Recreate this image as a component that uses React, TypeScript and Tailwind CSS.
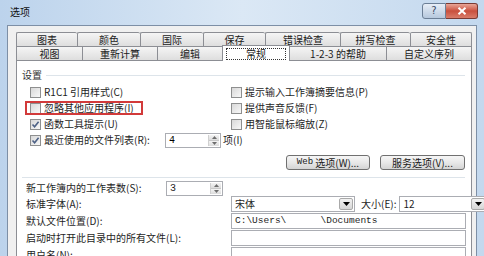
import React from "react";

const CJK = "font-['Noto_Sans_CJK_SC','Noto_Sans_CJK_JP',sans-serif]";

const row1 = [
  { t: "图表", w: "w-[61px]" },
  { t: "颜色", w: "w-[63px]" },
  { t: "国际", w: "w-[63px]" },
  { t: "保存", w: "w-[62px]" },
  { t: "错误检查", w: "w-[75px]" },
  { t: "拼写检查", w: "w-[70px]" },
  { t: "安全性", w: "w-[62px]" },
];

const row2 = [
  { t: "视图", w: "w-[66px]" },
  { t: "重新计算", w: "w-[75px]" },
  { t: "编辑", w: "w-[65px]" },
  { t: "常规", w: "w-[68px]", sel: true },
  { t: "1-2-3 的帮助", w: "w-[96px]" },
  { t: "自定义序列", w: "w-[86px]" },
];

function Box({ checked }: { checked?: boolean }) {
  return (
    <span className="w-[11px] h-[11px] shrink-0 border border-[#8e8f8f] bg-gradient-to-br from-[#d8d8d8] to-[#f8f8f8] flex items-center justify-center">
      {checked && (
        <svg width="9" height="9" viewBox="0 0 9 9">
          <path d="M1.5 4.5 L3.6 6.8 L7.6 1.8" fill="none" stroke="#4d6185" strokeWidth="1.6" />
        </svg>
      )}
    </span>
  );
}

function CheckRow({ label, checked }: { label: React.ReactNode; checked?: boolean }) {
  return (
    <div className="h-[16px] flex items-center gap-[3px]">
      <Box checked={checked} />
      <span className="text-[10px] leading-none text-[#1e1e1e] whitespace-nowrap">{label}</span>
    </div>
  );
}

function Spin({ value, w }: { value: string; w: string }) {
  return (
    <div className={`${w} h-[15px] shrink-0 border border-[#abadb3] bg-white flex`}>
      <span className="flex-1 pl-[3px] text-[10px] leading-[13px] font-['Liberation_Mono',monospace]">{value}</span>
      <span className="w-[11px] flex flex-col border-l border-[#d0d0d0] my-[1px] mr-[1px]">
        <span className="flex-1 bg-gradient-to-b from-[#f4f4f4] to-[#dcdcdc] border-b border-[#c8c8c8] flex items-center justify-center">
          <svg width="5" height="3" viewBox="0 0 5 3"><path d="M0 3 L2.5 0 L5 3Z" fill="#6d6d6d" /></svg>
        </span>
        <span className="flex-1 bg-gradient-to-b from-[#f4f4f4] to-[#dcdcdc] flex items-center justify-center">
          <svg width="5" height="3" viewBox="0 0 5 3"><path d="M0 0 L2.5 3 L5 0Z" fill="#6d6d6d" /></svg>
        </span>
      </span>
    </div>
  );
}

function Combo({ value, w }: { value: string; w: string }) {
  return (
    <div className={`${w} h-[16px] shrink-0 border border-[#abadb3] bg-white flex`}>
      <span className="flex-1 pl-[3px] text-[10px] leading-[14px]">{value}</span>
      <span className="w-[14px] m-[1px] border border-[#a9a9a9] rounded-[2px] bg-gradient-to-b from-[#f2f2f2] to-[#d6d6d6] flex items-center justify-center">
        <svg width="7" height="4" viewBox="0 0 7 4"><path d="M0 0 L3.5 4 L7 0Z" fill="#000" /></svg>
      </span>
    </div>
  );
}

function Field({ children }: { children?: React.ReactNode }) {
  return (
    <div className="w-[235px] h-[16px] shrink-0 border border-[#abadb3] bg-white pl-[3px] text-[9.5px] leading-[14px] font-['Liberation_Mono',monospace] whitespace-pre">
      {children}
    </div>
  );
}

export default function App() {
  return (
    <div className={`${CJK} w-[484px] h-[256px] overflow-hidden relative bg-gradient-to-r from-[#bcd3ec] via-[#dbe8f5] to-[#c3d8ee]`}>
      {/* title bar */}
      <div className="h-[25px] flex items-center pl-[10px] pb-[3px] text-[10px] text-[#111]">选项</div>
      <div className="absolute top-[3px] left-[422px] flex">
        <div className="w-[24px] h-[16px] rounded-l-[3px] border border-[#6c7f96] bg-gradient-to-b from-[#e7eef7] to-[#b6c8dd] flex items-center justify-center text-[10px] text-[#3a4a66] leading-none font-['DejaVu_Sans',sans-serif]">?</div>
        <div className="w-[32px] h-[16px] rounded-r-[3px] border border-l-0 border-[#7a3a33] bg-gradient-to-b from-[#e8a597] via-[#c9503e] to-[#d97c6a] flex items-center justify-center">
          <svg width="10" height="8" viewBox="0 0 10 8"><path d="M1.5 0.8 L8.5 7.2 M8.5 0.8 L1.5 7.2" stroke="#fff" strokeWidth="2" /></svg>
        </div>
      </div>

      {/* client area */}
      <div className="ml-[7px] w-[470px] h-[231px] bg-[#f0f0f0] border-l border-t border-r border-[#7d8fa6] pt-[6px] pl-[8px]">
        <div className="w-[456px]">
          {/* back row tabs */}
          <div className="flex h-[14px]">
            {row1.map((tb, i) => (
              <div
                key={tb.t}
                className={`${tb.w} border-t border-l ${i === row1.length - 1 ? "border-r" : ""} border-[#8c8e94] rounded-t-[2px] bg-gradient-to-b from-[#f5f5f5] to-[#dedede] flex items-center justify-center text-[10px] leading-none text-[#1a1a1a]`}
              >
                {tb.t}
              </div>
            ))}
          </div>
          {/* front row tabs */}
          <div className="flex h-[14px] relative z-10">
            {row2.map((tb, i) =>
              tb.sel ? (
                <div
                  key={tb.t}
                  className={`${tb.w} -mt-[1px] h-[16px] border-t border-l border-r border-[#8c8e94] bg-white flex items-start justify-center pt-[2px] px-[3px]`}
                >
                  <span className="w-full h-[12px] border border-dotted border-[#333] flex items-center justify-center text-[10px] leading-none text-[#1a1a1a]">
                    {tb.t}
                  </span>
                </div>
              ) : (
                <div
                  key={tb.t}
                  className={`${tb.w} border-t ${i === 0 || row2[i - 1].sel ? "" : "border-l"} ${i === 0 ? "border-l" : ""} ${i === row2.length - 1 ? "border-r" : ""} border-[#8c8e94] bg-gradient-to-b from-[#f5f5f5] to-[#dedede] flex items-center justify-center text-[10px] leading-none text-[#1a1a1a]`}
                >
                  {tb.t}
                </div>
              )
            )}
          </div>

          {/* panel */}
          <div className="h-[200px] border border-[#8c8e94] bg-white pt-[7px]">
            <div className="h-[14px] flex items-center pl-[5px] pr-[6px] gap-[4px]">
              <span className="text-[10px] leading-none text-[#333]">设置</span>
              <span className="flex-1 h-px bg-[#dde4ea]" />
            </div>
            <div className="mt-[2px] flex">
              <div className="w-[214px] shrink-0 pl-[13px]">
                <CheckRow label="R1C1 引用样式(C)" />
                <div className="relative">
                  <CheckRow label="忽略其他应用程序(I)" />
                  <span className="absolute left-[-5px] top-[1px] w-[118px] h-[14px] border-2 border-[#d23a3a]" />
                </div>
                <CheckRow label="函数工具提示(U)" checked />
                <div className="h-[16px] flex items-center whitespace-nowrap">
                  <Box checked />
                  <span className="ml-[3px] w-[121px] shrink-0 text-[10px] leading-none text-[#1e1e1e]">最近使用的文件列表(R):</span>
                  <Spin value="4" w="w-[56px]" />
                  <span className="ml-[2px] text-[10px] leading-none text-[#1e1e1e]">项(I)</span>
                </div>
              </div>
              <div>
                <CheckRow label="提示输入工作簿摘要信息(P)" />
                <CheckRow label="提供声音反馈(F)" />
                <CheckRow label="用智能鼠标缩放(Z)" />
              </div>
            </div>
            <div className="mt-[7px] flex justify-end gap-[10px] pr-[6px]">
              <div className="w-[84px] h-[15px] border border-[#707070] rounded-[3px] bg-gradient-to-b from-[#f6f6f6] via-[#e8e8e8] to-[#d4d4d4] flex items-center justify-center text-[10px] leading-none text-[#1a1a1a]">
                <span className="font-['Liberation_Mono',monospace] text-[9px]">Web</span>&nbsp;选项(W)...
              </div>
              <div className="w-[85px] h-[15px] border border-[#707070] rounded-[3px] bg-gradient-to-b from-[#f6f6f6] via-[#e8e8e8] to-[#d4d4d4] flex items-center justify-center text-[10px] leading-none text-[#1a1a1a]">
                服务选项(V)...
              </div>
            </div>
            <div className="mt-[7px] ml-[5px] mr-[6px] h-px bg-[#dde4ea]" />
            <div className="mt-[2px] pl-[9px] pr-[6px] text-[10px] leading-none text-[#1e1e1e] whitespace-nowrap">
              <div className="h-[16px] flex items-center">
                <span className="w-[140px] shrink-0">新工作簿内的工作表数(S):</span>
                <Spin value="3" w="w-[57px]" />
              </div>
              <div className="h-[16px] flex items-center">
                <span className="w-[205px] shrink-0">标准字体(A):</span>
                <Combo value="宋体" w="w-[124px]" />
                <span className="ml-[6px]">大小(E):</span>
                <span className="ml-[3px] flex"><Combo value="12" w="w-[88px]" /></span>
              </div>
              <div className="h-[17px] flex items-center">
                <span className="w-[205px] shrink-0">默认文件位置(D):</span>
                <Field>{"C:\\Users\\      \\Documents"}</Field>
              </div>
              <div className="h-[17px] flex items-center">
                <span className="w-[205px] shrink-0">启动时打开此目录中的所有文件(L):</span>
                <Field />
              </div>
              <div className="h-[17px] flex items-center">
                <span className="w-[205px] shrink-0">用户名(N):</span>
                <Field />
              </div>
            </div>
          </div>
        </div>
      </div>
    </div>
  );
}
